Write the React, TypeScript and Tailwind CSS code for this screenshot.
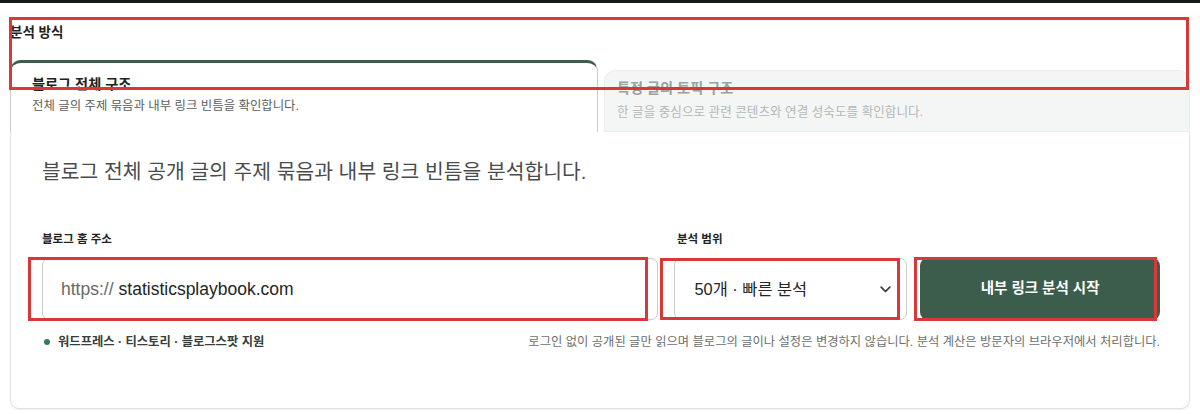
import React from "react";

const FONT = '"Liberation Sans", "Noto Sans CJK KR", sans-serif';

export default function App() {
  return (
    <div
      className="relative w-[1200px] h-[414px] overflow-hidden bg-white"
      style={{ fontFamily: FONT }}
    >
      <div className="h-[3px] bg-[#17191c]" />
      <div className="px-[10px] pt-[22px]">
        <div className="text-[13.5px] font-bold leading-[16px] text-[#1f2321]">분석 방식</div>

        {/* tabs */}
        <div className="mt-[19px] flex items-end">
          <div className="h-[72px] w-[588px] rounded-t-[11px] border border-b-0 border-[#c9cecb] border-t-[3px] border-t-[#3d5e4c] bg-white pl-[21px] pt-[11px]">
            <div className="text-[14.2px] font-bold leading-[20px] text-[#1e2220]">블로그 전체 구조</div>
            <div className="mt-[4px] text-[12.4px] leading-[16px] text-[#5b605d]">
              전체 글의 주제 묶음과 내부 링크 빈틈을 확인합니다.
            </div>
          </div>
          <div className="ml-[6px] h-[62px] flex-1 rounded-t-[11px] border border-[#eceeed] bg-[#f4f6f5] pl-[12px] pt-[7px]">
            <div className="text-[14.2px] font-bold leading-[20px] text-[#9ca29f]">특정 글의 토픽 구조</div>
            <div className="mt-[6px] text-[12.6px] leading-[16px] text-[#b3b8b5]">
              한 글을 중심으로 관련 콘텐츠와 연결 성숙도를 확인합니다.
            </div>
          </div>
        </div>

        {/* panel */}
        <div className="h-[277px] rounded-b-[9px] border border-t-0 border-[#dfe3e1] bg-white pl-[31px] pr-[29px] pt-[26px] shadow-[0_1px_2px_rgba(0,0,0,0.06)]">
          <div className="text-[20.4px] leading-[28px] text-[#4a4c4b]">
            블로그 전체 공개 글의 주제 묶음과 내부 링크 빈틈을 분석합니다.
          </div>

          <div className="mt-[45px] flex">
            <div className="w-[617px]">
              <div className="text-[11.5px] font-bold leading-[16px] text-[#1f2321]">블로그 홈 주소</div>
            </div>
            <div className="ml-[16px] w-[233px] pl-[2px]">
              <div className="text-[11.5px] font-bold leading-[16px] text-[#1f2321]">분석 범위</div>
            </div>
          </div>

          <div className="mt-[11px] flex h-[62px]">
            <div className="flex w-[617px] items-center rounded-[7px] border border-[#c8ccca] pl-[18px] text-[17.5px]">
              <span className="text-[#666a68]">https://</span>
              <span className="ml-[5px] text-[#222524]">statisticsplaybook.com</span>
            </div>
            <div className="ml-[16px] flex w-[233px] items-center justify-between rounded-[7px] border border-[#c8ccca] pl-[19px] pr-[15px] text-[16.4px] text-[#222524]">
              <span>50개 · 빠른 분석</span>
              <svg width="11" height="7" viewBox="0 0 11 7" fill="none">
                <path d="M1.2 1.2L5.5 5.5L9.8 1.2" stroke="#3a3d3c" strokeWidth="1.7" strokeLinecap="round" strokeLinejoin="round" />
              </svg>
            </div>
            <div className="ml-[13px] flex w-[240px] items-center justify-center rounded-[8px] bg-[#3c5d4b] text-[14.5px] font-bold text-white">
              내부 링크 분석 시작
            </div>
          </div>

          <div className="mt-[14px] flex items-center justify-between leading-[16px]">
            <div className="flex items-center pl-[2px]">
              <span className="h-[6px] w-[6px] rounded-full bg-[#2f7d5a]" />
              <span className="ml-[8px] text-[12.3px] font-bold text-[#37403b]">
                워드프레스 · 티스토리 · 블로그스팟 지원
              </span>
            </div>
            <div className="text-[12.3px] text-[#6b6f6d]">
              로그인 없이 공개된 글만 읽으며 블로그의 글이나 설정은 변경하지 않습니다. 분석 계산은 방문자의 브라우저에서 처리합니다.
            </div>
          </div>
        </div>
      </div>

      {/* red annotation boxes */}
      <div className="pointer-events-none absolute left-[9px] top-[17px] h-[73px] w-[1180px] border-[3px] border-[#d8383a]" />
      <div className="pointer-events-none absolute left-[28px] top-[257px] h-[64px] w-[620px] border-[3px] border-[#d8383a]" />
      <div className="pointer-events-none absolute left-[660px] top-[258px] h-[62px] w-[240px] border-[3px] border-[#d8383a]" />
      <div className="pointer-events-none absolute left-[914px] top-[257px] h-[64px] w-[243px] border-[3px] border-[#d8383a]" />
    </div>
  );
}
